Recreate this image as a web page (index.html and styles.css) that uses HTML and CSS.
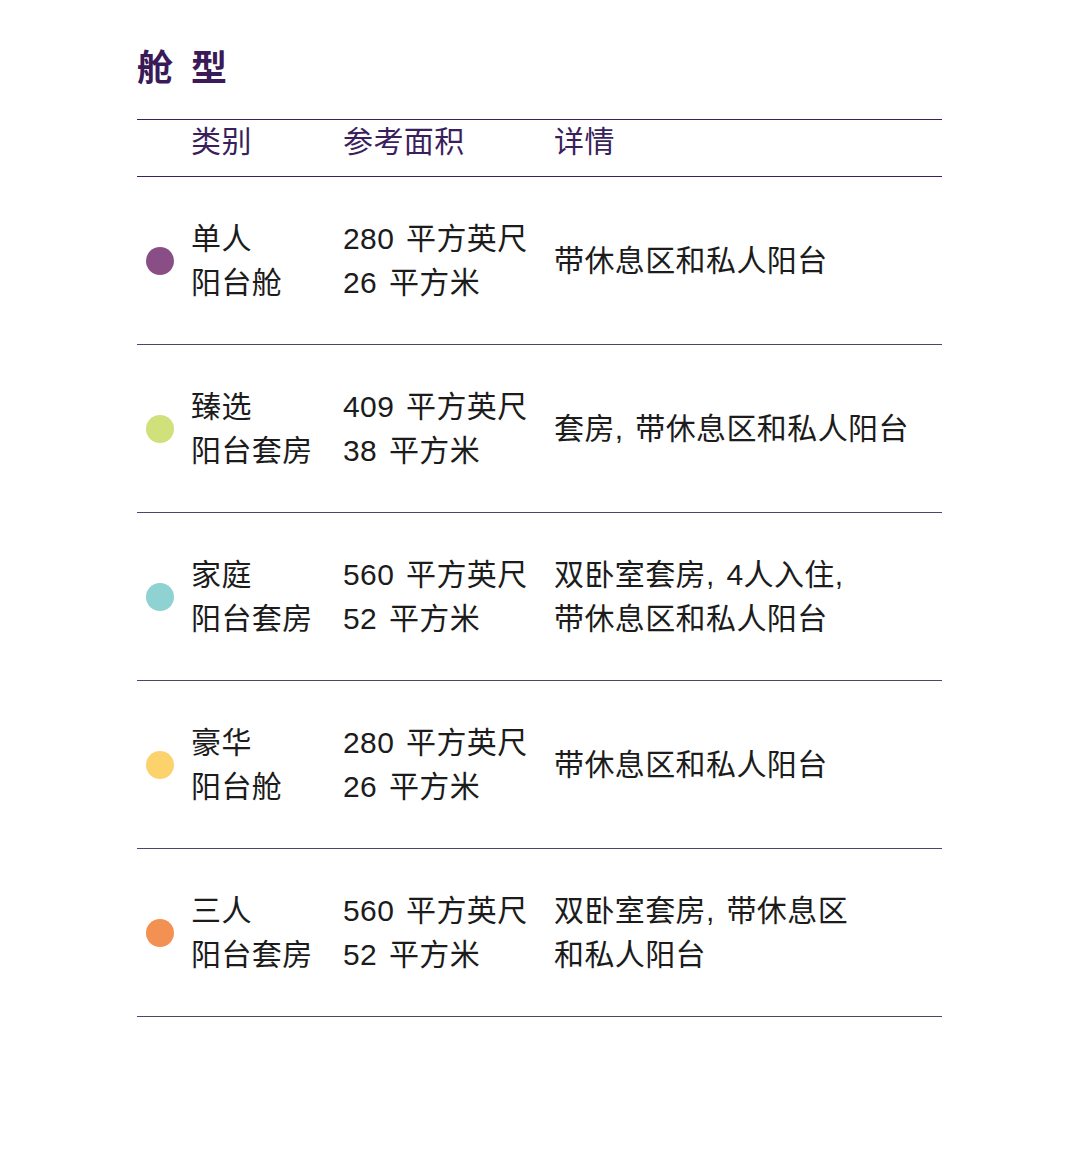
FILE: index.html
```html
<!DOCTYPE html>
<html lang="zh-CN">
<head>
<meta charset="utf-8">
<title>舱型</title>
<link rel="stylesheet" href="styles.css">
</head>
<body>
<main class="page">
  <h1 class="title">舱 型</h1>
  <div class="table">
    <div class="row head">
      <div class="cell"></div>
      <div class="cell">类别</div>
      <div class="cell">参考面积</div>
      <div class="cell">详情</div>
    </div>
    <div class="row">
      <div class="cell dotcell"><span class="dot purple"></span></div>
      <div class="cell">单人<br>阳台舱</div>
      <div class="cell">280 平方英尺<br>26 平方米</div>
      <div class="cell">带休息区和私人阳台</div>
    </div>
    <div class="row">
      <div class="cell dotcell"><span class="dot green"></span></div>
      <div class="cell">臻选<br>阳台套房</div>
      <div class="cell">409 平方英尺<br>38 平方米</div>
      <div class="cell">套房, 带休息区和私人阳台</div>
    </div>
    <div class="row">
      <div class="cell dotcell"><span class="dot teal"></span></div>
      <div class="cell">家庭<br>阳台套房</div>
      <div class="cell">560 平方英尺<br>52 平方米</div>
      <div class="cell">双卧室套房, 4人入住,<br>带休息区和私人阳台</div>
    </div>
    <div class="row">
      <div class="cell dotcell"><span class="dot yellow"></span></div>
      <div class="cell">豪华<br>阳台舱</div>
      <div class="cell">280 平方英尺<br>26 平方米</div>
      <div class="cell">带休息区和私人阳台</div>
    </div>
    <div class="row">
      <div class="cell dotcell"><span class="dot orange"></span></div>
      <div class="cell">三人<br>阳台套房</div>
      <div class="cell">560 平方英尺<br>52 平方米</div>
      <div class="cell">双卧室套房, 带休息区<br>和私人阳台</div>
    </div>
  </div>
</main>
</body>
</html>
```

FILE: styles.css
```css
html, body {
  margin: 0;
  padding: 0;
  background: #ffffff;
}

body {
  font-family: "Liberation Sans", "Noto Sans CJK SC", sans-serif;
  color: #1c1c1c;
}

.page {
  width: 805px;
  padding: 47px 0 0 137px;
}

.title {
  margin: 0 0 28px;
  font-size: 36px;
  line-height: 44px;
  font-weight: 700;
  color: #3a1a58;
  word-spacing: 8px;
}

.table {
  display: flex;
  flex-direction: column;
}

.row {
  display: grid;
  grid-template-columns: 54px 152px 211px 1fr;
  align-items: center;
  height: 167px;
  border-bottom: 1px solid #4a4868;
  font-size: 30px;
  line-height: 44px;
  letter-spacing: 0.4px;
  word-spacing: 3px;
}

.row.head {
  height: 56px;
  align-items: start;
  border-top: 1px solid #3f1f60;
  border-bottom: 1px solid #3f1f60;
  color: #3b1f5c;
}

.cell {
  white-space: nowrap;
}

.dotcell {
  display: flex;
  align-items: center;
  padding-left: 9px;
}

.dot {
  display: block;
  width: 28px;
  height: 28px;
  border-radius: 50%;
}

.purple { background: #8a4e87; }
.green { background: #d0e07b; }
.teal { background: #8ed3d1; }
.yellow { background: #fcd26d; }
.orange { background: #f39152; }
```
